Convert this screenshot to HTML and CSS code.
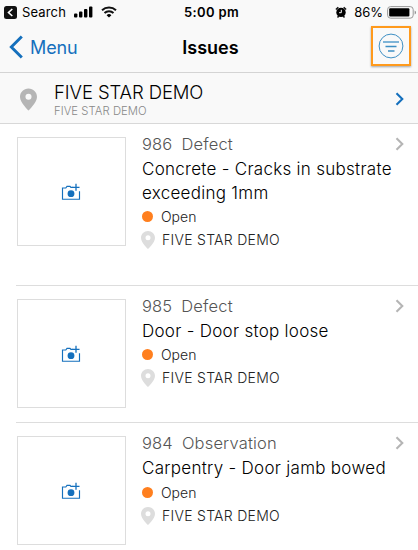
FILE: index.html
```html
<!DOCTYPE html>
<html lang="en">
  <head>
    <meta charset="UTF-8" />
    <meta name="viewport" content="width=device-width, initial-scale=1.0" />
    <title>Issues</title>
    <link rel="stylesheet" href="styles.css">
  </head>

  <body>
    <!-- shared icons -->
    <svg class="sprite" width="0" height="0">
      <symbol id="pin" viewBox="0 0 14 18">
        <path fill-rule="evenodd" d="M7 0C3.1 0 0 3 0 6.9 0 11.500 7 18 7 18s7-6.500 7-11.100C14 3 10.900 0 7 0zm0 4.300a2.500 2.500 0 1 1 0 5 2.500 2.500 0 0 1 0-5z" />
      </symbol>
      <symbol id="chevron" viewBox="0 0 10 14">
        <path d="M1.500 1.200 7.300 7l-5.800 5.800" fill="none" stroke="currentColor" stroke-width="2.100" />
      </symbol>
      <symbol id="camera" viewBox="0 0 20 18">
        <path d="M12.200 4.400H9.900L9 3.300H6L4.800 5H1.500v11.200h17V8.300" fill="none" stroke="currentColor" stroke-width="1.150" />
        <path d="M15 .8v7M11.500 4.300h7" fill="none" stroke="currentColor" stroke-width="1.300" />
        <circle cx="10" cy="10.700" r="3.400" fill="currentColor" />
      </symbol>
    </svg>

    <div class="status-bar">
      <div class="status-left">
        <svg class="back-app" width="13" height="13" viewBox="0 0 13 13">
          <rect width="13" height="13" rx="2.500" fill="#111" />
          <path d="M8.300 3 4.500 6.500 8.300 10" fill="none" stroke="#fff" stroke-width="1.600" />
        </svg>
        <span class="search">Search</span>
        <svg class="signal" width="19" height="12" viewBox="0 0 19 12">
          <rect x="0" y="7.500" width="3.400" height="4" rx="1" />
          <rect x="5" y="5.500" width="3.400" height="6" rx="1" />
          <rect x="10" y="3" width="3.400" height="8.500" rx="1" />
          <rect x="15" y="0.500" width="3.400" height="11" rx="1" />
        </svg>
        <svg class="wifi" width="16" height="12" viewBox="0 0 16 12">
          <path d="M1 4.300a10.300 10.300 0 0 1 14 0M3.500 7a6.600 6.600 0 0 1 9 0" fill="none" stroke="#111" stroke-width="2" />
          <path d="M8 11.600 5.600 9.200a3.500 3.500 0 0 1 4.800 0z" />
        </svg>
      </div>
      <span class="time">5:00 pm</span>
      <div class="status-right">
        <svg class="alarm" width="12" height="12" viewBox="0 0 12 12">
          <circle cx="6" cy="6.400" r="4.700" />
          <path d="M.9 3.500 3.300 1.200M11.100 3.500 8.700 1.200M2.500 11.500l1.300-1.500M9.500 11.500 8.200 10" stroke="#111" stroke-width="1.500" />
          <path d="M6.300 3.800v2.900H4.100" fill="none" stroke="#fff" stroke-width="1" />
        </svg>
        <span class="percent">86%</span>
        <svg class="battery" width="30" height="13" viewBox="0 0 30 13">
          <rect x=".6" y=".6" width="25.600" height="11.600" rx="3" fill="none" stroke="#999" stroke-width="1" />
          <rect x="2.200" y="2.200" width="20.200" height="8.400" rx="1" />
          <path d="M27.700 4.500c1.700.7 1.700 3.300 0 4z" fill="#888" />
        </svg>
      </div>
    </div>

    <div class="nav-bar">
      <div class="menu">
        <svg width="14" height="24" viewBox="0 0 14 24">
          <path d="M12.800 1.400 2.300 12l10.500 10.600" fill="none" stroke="currentColor" stroke-width="2.900" />
        </svg>
        <span>Menu</span>
      </div>
      <h1 class="title">Issues</h1>
      <div class="filter">
        <svg width="26" height="26" viewBox="0 0 26 26" fill="none" stroke="#3d8fc4">
          <circle cx="13" cy="13" r="11.900" stroke-width="1" />
          <path d="M5 9h16" stroke-width="1.300" />
          <path d="M7.500 13.500h11M10 18h6.500" stroke-width="1.300" />
        </svg>
      </div>
    </div>

    <div class="location-bar">
      <svg class="location-pin" width="17" height="23"><use href="#pin" /></svg>
      <div class="location-text">
        <div class="location-name">FIVE STAR DEMO</div>
        <div class="location-sub">FIVE STAR DEMO</div>
      </div>
      <svg class="arrow" width="10" height="14"><use href="#chevron" /></svg>
    </div>

    <div class="issues">
      <div class="issue issue-tall">
        <div class="photo"><svg width="20" height="18"><use href="#camera" /></svg></div>
        <div class="detail">
          <div class="kind"><span class="number">986</span><span>Defect</span></div>
          <div class="name">Concrete - Cracks in substrate exceeding 1mm</div>
          <div class="status"><i class="dot"></i>Open</div>
          <div class="place"><svg width="14" height="18"><use href="#pin" /></svg>FIVE STAR DEMO</div>
        </div>
        <svg class="arrow" width="10" height="14"><use href="#chevron" /></svg>
      </div>

      <div class="issue">
        <div class="photo"><svg width="20" height="18"><use href="#camera" /></svg></div>
        <div class="detail">
          <div class="kind"><span class="number">985</span><span>Defect</span></div>
          <div class="name">Door - Door stop loose</div>
          <div class="status"><i class="dot"></i>Open</div>
          <div class="place"><svg width="14" height="18"><use href="#pin" /></svg>FIVE STAR DEMO</div>
        </div>
        <svg class="arrow" width="10" height="14"><use href="#chevron" /></svg>
      </div>

      <div class="issue">
        <div class="photo"><svg width="20" height="18"><use href="#camera" /></svg></div>
        <div class="detail">
          <div class="kind"><span class="number">984</span><span>Observation</span></div>
          <div class="name">Carpentry - Door jamb bowed</div>
          <div class="status"><i class="dot"></i>Open</div>
          <div class="place"><svg width="14" height="18"><use href="#pin" /></svg>FIVE STAR DEMO</div>
        </div>
        <svg class="arrow" width="10" height="14"><use href="#chevron" /></svg>
      </div>
    </div>
  </body>
</html>
```
FILE: styles.css
```css
* {
  box-sizing: border-box;
}
html,
body {
  margin: 0;
  padding: 0;
}
body {
  height: 550px;
  overflow: hidden;
  background: #fff;
  color: #000;
  font-family: Inter, "Liberation Sans", sans-serif;
  font-weight: 300;
}
svg {
  display: block;
  flex: none;
}
.sprite {
  position: absolute;
}

/* status bar */
.status-bar {
  display: grid;
  grid-template-columns: 1fr auto 1fr;
  align-items: center;
  height: 24px;
  padding: 0 1px 0 4px;
  background: #f9f9f9;
  font-size: 13px;
  font-weight: 400;
}
.status-left,
.status-right {
  display: flex;
  align-items: center;
}
.status-right {
  justify-content: flex-end;
}
.search {
  margin: 0 8px 0 5px;
  letter-spacing: 0.15px;
}
.wifi {
  margin-left: 8px;
}
.time {
  margin-left: 2px;
  font-weight: 600;
  letter-spacing: 0.35px;
}
.percent {
  margin: 0 4px 0 7px;
}

/* nav bar */
.nav-bar {
  display: grid;
  grid-template-columns: 1fr auto 1fr;
  align-items: center;
  height: 49px;
  padding: 0 7px 2px 9px;
  border-bottom: 1px solid #d4d4d4;
  background: #f9f9f9;
}
.menu {
  display: flex;
  align-items: center;
  gap: 7px;
  color: #1570bd;
  font-size: 18px;
  font-weight: 400;
  letter-spacing: -0.1px;
}
.title {
  margin: 0 0 0 1px;
  font-size: 18px;
  font-weight: 600;
}
.filter {
  display: flex;
  align-items: center;
  justify-content: center;
  justify-self: end;
  width: 40px;
  height: 40px;
  margin-top: -2px;
  border: 2px solid #ff9a1c;
  box-shadow: 0 1px 2px rgba(0, 0, 0, 0.35);
}

/* selected location */
.location-bar {
  display: flex;
  align-items: center;
  height: 51px;
  padding: 2px 13px 0 20px;
  border-bottom: 1px solid #d8d8d8;
  background: #f9f9f9;
}
.location-pin {
  fill: #b5b5b5;
}
.location-text {
  flex: 1;
  margin-left: 17px;
}
.location-name {
  font-size: 18.5px;
  line-height: 22px;
  letter-spacing: -0.1px;
}
.location-sub {
  padding-top: 1px;
  color: #888;
  font-size: 11.3px;
  line-height: 14px;
  letter-spacing: 0.05px;
}
.location-bar .arrow {
  color: #1570bd;
}

/* issue list */
.issues {
  padding-left: 16px;
}
.issue {
  display: flex;
  align-items: flex-start;
  height: 137px;
  padding: 13px 13px 0 1px;
  border-bottom: 1px solid #ddd;
}
.issue-tall {
  height: 162px;
}
.issue:last-child {
  border-bottom: 0;
}
.photo {
  display: flex;
  align-items: center;
  justify-content: center;
  flex: none;
  width: 109px;
  height: 109px;
  padding-right: 2px;
  border: 1px solid #ddd;
  color: #1570bd;
}
.detail {
  flex: 1;
  margin: -5px -10px 0 16px;
}
.kind {
  display: flex;
  gap: 9px;
  color: #555;
  font-size: 16.5px;
  line-height: 24px;
  letter-spacing: 0.17px;
}
.name {
  padding-top: 1px;
  font-size: 17px;
  line-height: 24px;
  letter-spacing: 0.28px;
}
.status,
.place {
  display: flex;
  align-items: center;
  color: #222;
  font-size: 14px;
  line-height: 23px;
}
.dot {
  width: 11px;
  height: 11px;
  margin-right: 8px;
  border-radius: 50%;
  background: #ff7f1e;
}
.place {
  letter-spacing: 0.28px;
}
.place svg {
  margin: 0 7px 0 -1px;
  fill: #ddd;
}
.issue:last-child .status {
  padding-top: 1px;
}
.issue .arrow {
  color: #b5b5b5;
}
```
